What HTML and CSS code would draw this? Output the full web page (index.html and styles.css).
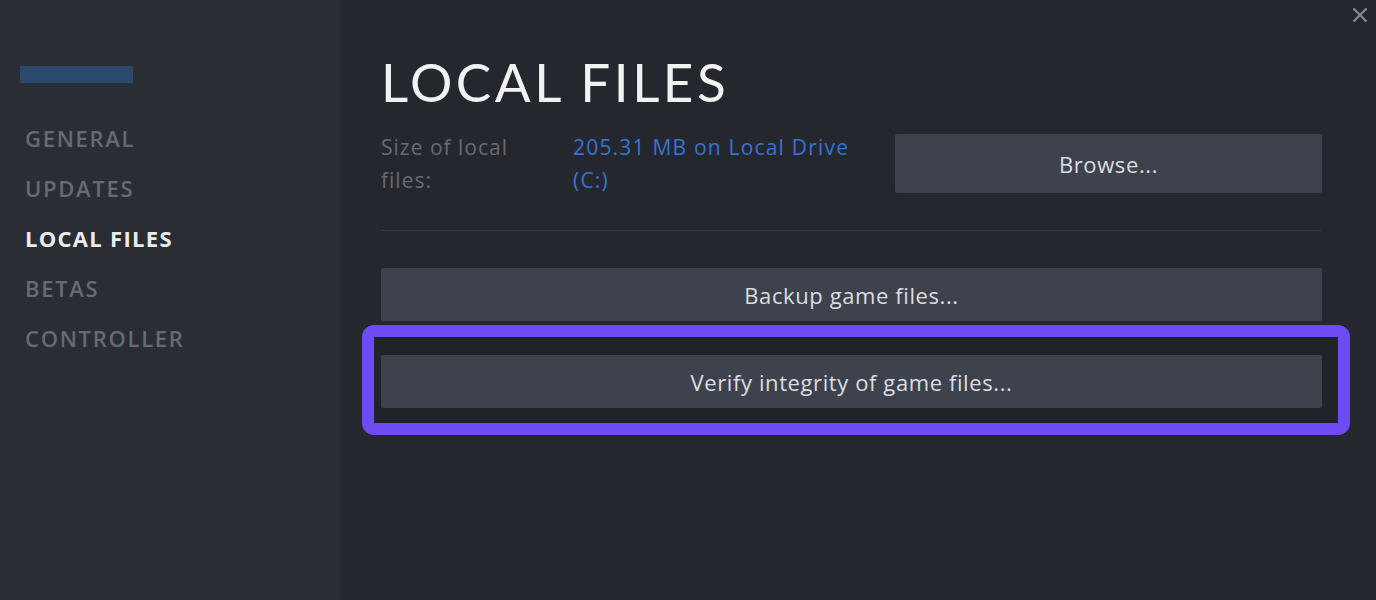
FILE: index.html
```html
<!DOCTYPE html>
<html lang="en">
<head>
<meta charset="utf-8">
<title>Local Files</title>
<link rel="stylesheet" href="styles.css">
</head>
<body>
<div class="window">
  <aside class="sidebar">
    <div class="game-bar"></div>
    <nav class="nav">
      <div class="nav-item">GENERAL</div>
      <div class="nav-item">UPDATES</div>
      <div class="nav-item active">LOCAL FILES</div>
      <div class="nav-item">BETAS</div>
      <div class="nav-item">CONTROLLER</div>
    </nav>
  </aside>
  <main class="content">
    <h1 class="title">LOCAL FILES</h1>
    <div class="size-row">
      <div class="size-label">Size of local<br>files:</div>
      <div class="size-value">205.31 MB on Local Drive<br>(C:)</div>
      <button class="btn btn-browse">Browse...</button>
    </div>
    <div class="divider"></div>
    <button class="btn btn-wide">Backup game files...</button>
    <div class="highlight">
      <button class="btn btn-wide">Verify integrity of game files...</button>
    </div>
  </main>
  <div class="close">
    <svg width="16" height="16" viewBox="0 0 16 16"><path d="M2 2 L14 14 M14 2 L2 14" stroke="#7f8b97" stroke-width="2.2" stroke-linecap="round"/></svg>
  </div>
</div>
</body>
</html>
```
FILE: styles.css
```css
* { box-sizing: border-box; }
html, body { margin: 0; padding: 0; }
body {
  background: #25272e;
  font-family: "Open Sans", "Liberation Sans", sans-serif;
  width: 1376px;
  height: 600px;
  overflow: hidden;
}
.window {
  display: flex;
  height: 600px;
  position: relative;
}
.sidebar {
  width: 340px;
  flex: none;
  background: #2b2d35;
  padding: 66px 0 0 20px;
}
.game-bar {
  width: 113px;
  height: 17px;
  background: #2c4a6c;
}
.nav {
  display: flex;
  flex-direction: column;
  margin-top: 30px;
  padding-left: 5px;
}
.nav-item {
  height: 50px;
  line-height: 50px;
  font-size: 22px;
  font-weight: 600;
  color: #676a71;
  letter-spacing: 1.7px;
}
.nav-item.active {
  color: #ececec;
  font-weight: 700;
  letter-spacing: 1.3px;
}
.content {
  flex: 1;
  padding: 0 54px 0 41px;
  display: flex;
  flex-direction: column;
}
.title {
  margin: 50px 0 0 0;
  font-size: 53px;
  font-weight: 400;
  letter-spacing: 3.5px;
  color: #f2f2f2;
  line-height: 64px;
  font-family: "Lato", "Open Sans", sans-serif;
}
.size-row {
  display: flex;
  align-items: flex-start;
  margin-top: 17px;
}
.size-label {
  width: 192px;
  font-size: 21px;
  line-height: 33px;
  color: #686b72;
  font-weight: 400;
  letter-spacing: 1px;
}
.size-value {
  width: 322px;
  font-size: 21px;
  line-height: 33px;
  color: #3773d3;
  letter-spacing: 1.2px;
}
.btn {
  border: none;
  background: #3e424d;
  color: #dcdde0;
  font-family: "Open Sans", "Liberation Sans", sans-serif;
  font-size: 22px;
  letter-spacing: 0.6px;
  border-radius: 2px;
  display: flex;
  align-items: center;
  justify-content: center;
  padding: 0;
}
.btn-browse {
  margin-left: auto;
  width: 427px;
  height: 59px;
  margin-top: 3px;
}
.divider {
  height: 1px;
  background: #34373e;
  margin-top: 33px;
}
.btn-wide {
  width: 100%;
  height: 53px;
}
.content > .btn-wide {
  margin-top: 37px;
}
.highlight {
  margin: 4px -28px 0 -19px;
  border: 12px solid #6d4cf6;
  border-radius: 12px;
  padding: 18px 16px 15px 7px;
  background: #212329;
}
.close {
  position: absolute;
  top: 6px;
  right: 8px;
}
```
